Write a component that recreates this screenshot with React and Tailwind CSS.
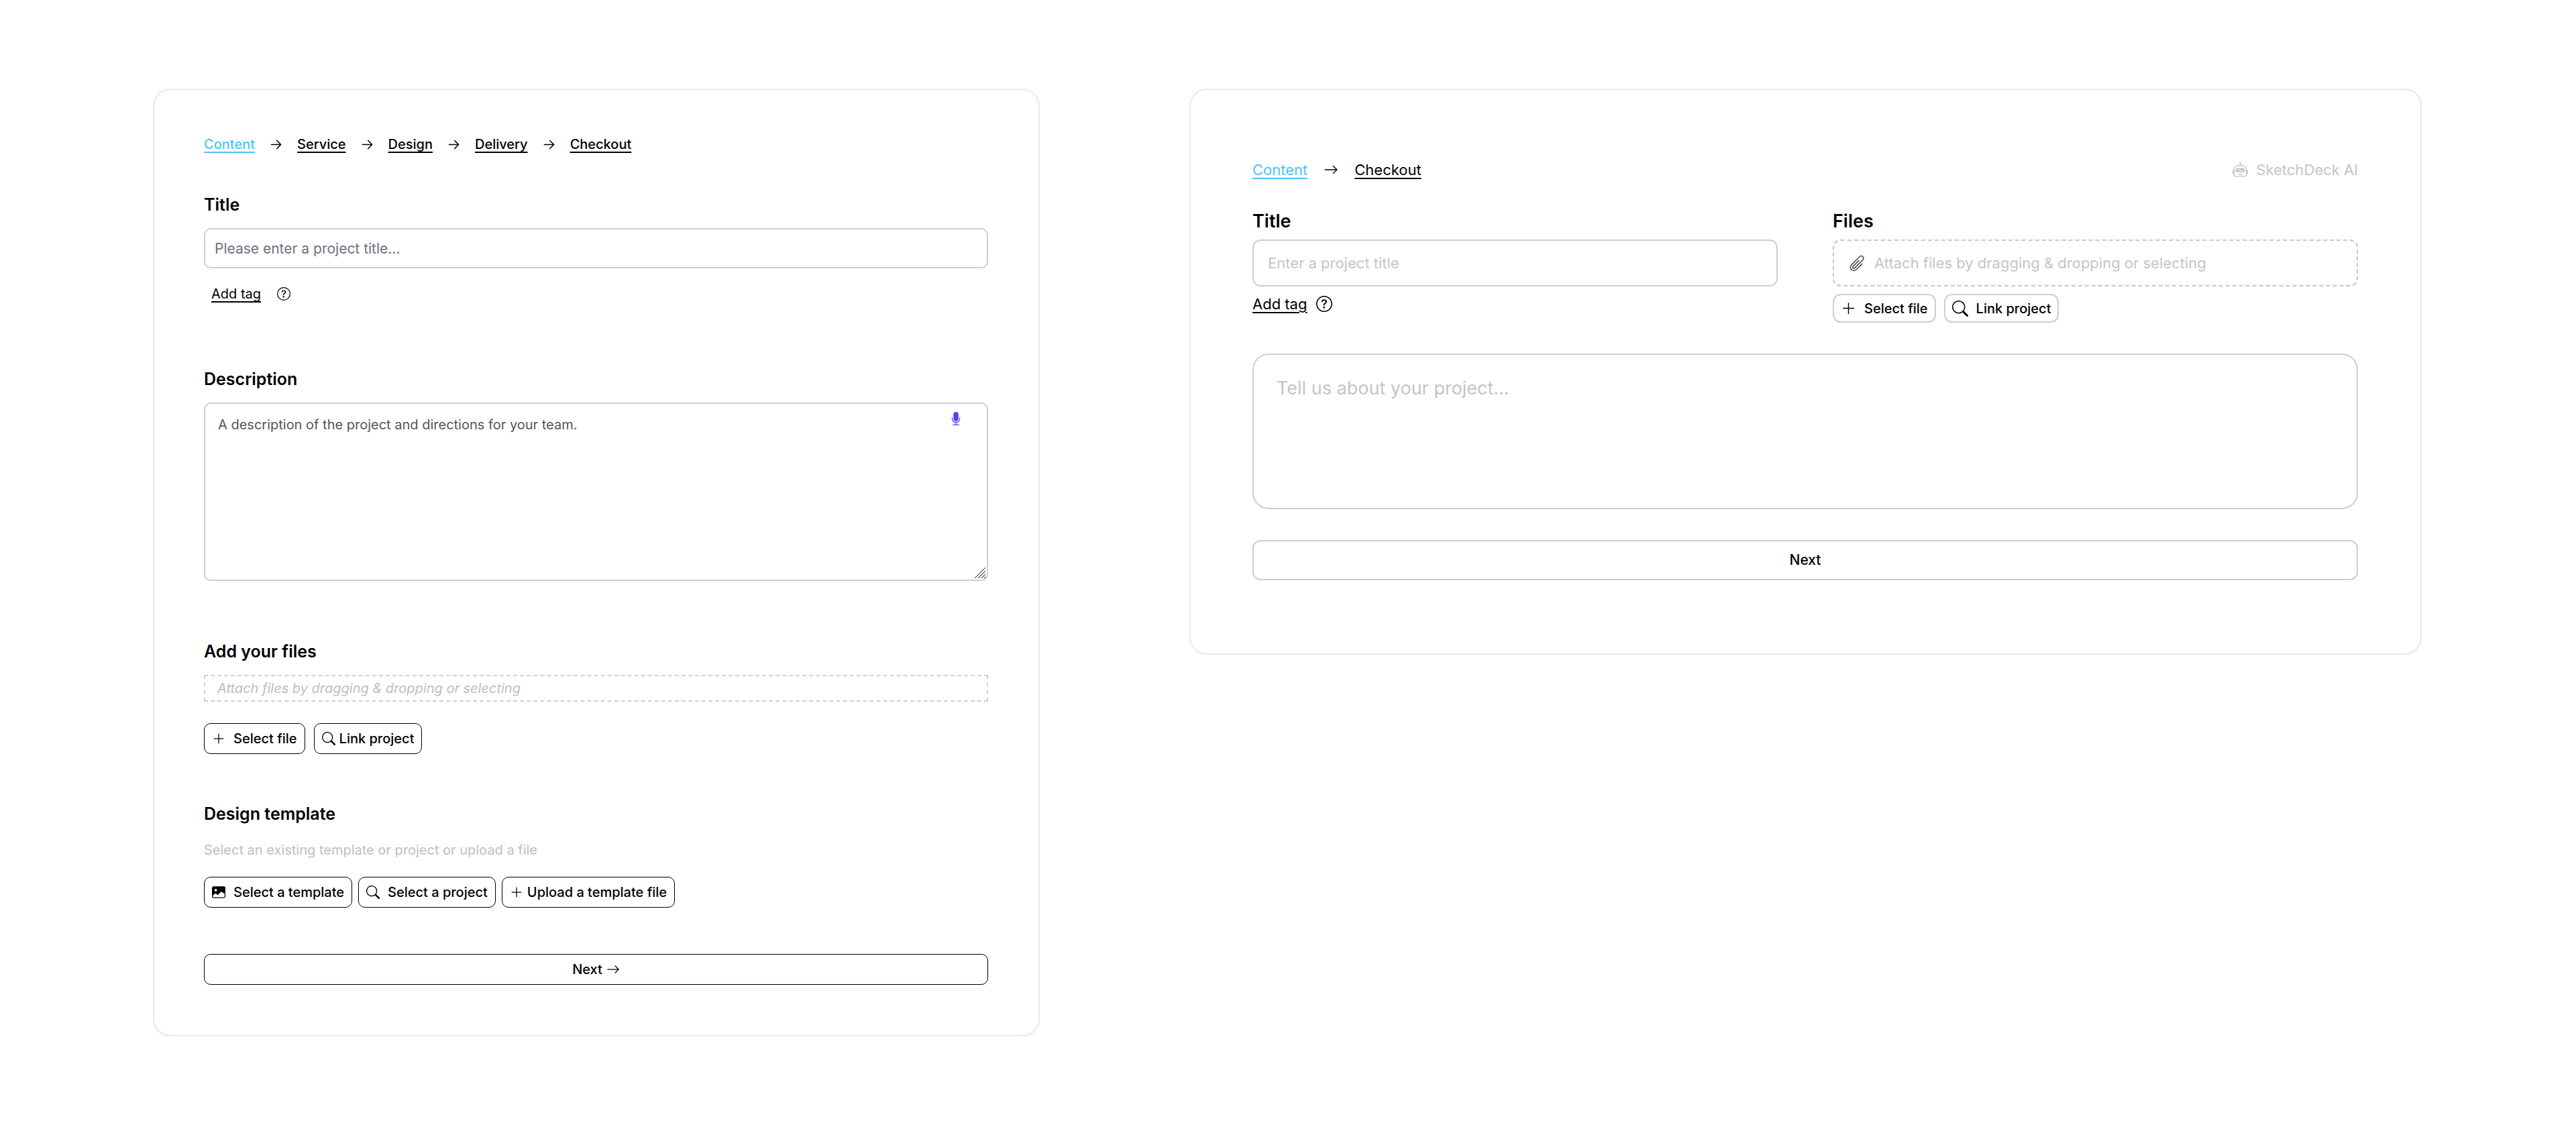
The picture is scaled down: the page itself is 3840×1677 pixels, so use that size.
import React, { useState } from 'react';
import {
  BsArrowRight,
  BsImageFill,
  BsMicFill,
  BsPlusLg,
  BsQuestionCircle,
  BsRobot,
  BsSearch
} from 'react-icons/bs';
import { HiOutlineArrowRight, HiOutlinePaperClip } from 'react-icons/hi2';

const STEPS = ['Content', 'Service', 'Design', 'Delivery', 'Checkout'];
const SHORT_STEPS = ['Content', 'Checkout'];

// --- Shared pieces ---
function Steps({ steps, current, className, arrow }) {
  return (
    <nav aria-label="Steps">
      <ol className={`flex items-center ${className}`}>
        {steps.map((step, i) => (
          <React.Fragment key={step}>
            {i > 0 && <li aria-hidden="true">{arrow}</li>}
            <li>
              <a
                href={`#${step.toLowerCase()}`}
                className={`block underline decoration-2 underline-offset-4 ${step === current ? 'text-[#4fc3f7]' : 'text-black'}`}
              >
                {step}
              </a>
            </li>
          </React.Fragment>
        ))}
      </ol>
    </nav>
  );
}

function OutlineButton({ icon, gap = 'gap-3', children }) {
  return (
    <button type="button" className={`flex h-[46px] items-center rounded-[10px] border border-black px-[11px] text-[20px] leading-6 font-medium ${gap}`}>
      {icon}
      {children}
    </button>
  );
}

function SoftButton({ icon, children }) {
  return (
    <button type="button" className="flex h-[43px] items-center gap-3 rounded-xl border-2 border-[#cdcdd4] px-[10px] text-[20px] leading-6 font-medium">
      {icon}
      {children}
    </button>
  );
}

function ResizeGrip() {
  return (
    <svg className="pointer-events-none absolute right-1 bottom-1 size-4" viewBox="0 0 16 16" fill="none" stroke="#555" strokeWidth="1.2" aria-hidden="true">
      <path d="M0 16L16 0M5 16L16 5M10 16L16 10M14 16L16 14" />
    </svg>
  );
}

// --- Full form ---
function FullForm() {
  const [title, setTitle] = useState('');
  const [description, setDescription] = useState('');

  return (
    <form className="rounded-[26px] border-2 border-[#e8e8eb] pt-[69px] pr-[75px] pb-[75px] pl-[74px]">
      <Steps
        steps={STEPS}
        current="Content"
        className="gap-[22px] text-[20px] leading-6 font-medium"
        arrow={<HiOutlineArrowRight size={19} strokeWidth={2} />}
      />

      <label htmlFor="full-title" className="mt-[62px] block text-[25px] leading-8 font-semibold">Title</label>
      <input
        id="full-title"
        type="text"
        value={title}
        onChange={(e) => setTitle(e.target.value)}
        placeholder="Please enter a project title..."
        className="mt-[19px] block h-[60px] w-full rounded-[10px] border-2 border-[#cdcdd4] px-[14px] text-[21px] placeholder:text-[#6b7280]"
      />
      <div className="mt-[26px] flex items-center gap-6 pl-[11px] text-[20px] leading-6">
        <button type="button" className="underline decoration-2 underline-offset-4">Add tag</button>
        <BsQuestionCircle size={20} />
      </div>

      <label htmlFor="full-description" className="mt-[99px] block text-[25px] leading-8 font-semibold">Description</label>
      <div className="relative mt-[19px]">
        <textarea
          id="full-description"
          value={description}
          onChange={(e) => setDescription(e.target.value)}
          placeholder="A description of the project and directions for your team."
          className="block h-[266px] w-full resize-none rounded-[10px] border-2 border-[#cdcdd4] px-[19px] pt-[19px] text-[20px] leading-6 placeholder:text-[#555]"
        />
        <button type="button" aria-label="Dictate" className="absolute top-[14px] right-[38px] text-[#5b3df5]">
          <BsMicFill size={20} />
        </button>
        <ResizeGrip />
      </div>

      <h2 className="mt-[89px] text-[25px] leading-8 font-semibold">Add your files</h2>
      <label className="mt-[19px] flex h-10 items-center border-2 border-dashed border-[#d0d0d6] px-[18px] text-[20px] leading-6 text-[#bdbdc5] italic">
        <input type="file" multiple className="sr-only" />
        Attach files by dragging &amp; dropping or selecting
      </label>
      <div className="mt-8 flex gap-[13px]">
        <OutlineButton icon={<BsPlusLg size={20} />}>Select file</OutlineButton>
        <OutlineButton icon={<BsSearch size={20} />} gap="gap-1.5">Link project</OutlineButton>
      </div>

      <h2 className="mt-[73px] text-[25px] leading-8 font-semibold">Design template</h2>
      <p className="mt-[26px] text-[20px] leading-6 text-[#bdbdc5]">Select an existing template or project or upload a file</p>
      <div className="mt-7 flex gap-[9px]">
        <OutlineButton icon={<BsImageFill size={20} />}>Select a template</OutlineButton>
        <OutlineButton icon={<BsSearch size={20} />}>Select a project</OutlineButton>
        <OutlineButton icon={<BsPlusLg size={20} />} gap="gap-1.5">Upload a template file</OutlineButton>
      </div>

      <button type="submit" className="mt-[69px] flex h-[46px] w-full items-center justify-center gap-1.5 rounded-[10px] border border-black text-[20px] leading-6 font-medium">
        Next
        <BsArrowRight size={20} />
      </button>
    </form>
  );
}

// --- Short form ---
function ShortForm() {
  const [title, setTitle] = useState('');
  const [brief, setBrief] = useState('');

  return (
    <form className="rounded-[26px] border-2 border-[#e8e8eb] pt-[105px] pr-[93px] pb-[109px] pl-[92px]">
      <div className="flex items-center justify-between text-[22px] leading-7">
        <Steps
          steps={SHORT_STEPS}
          current="Content"
          className="gap-6"
          arrow={<BsArrowRight size={22} />}
        />
        <div className="flex items-center gap-3 text-[#c4c4cc]">
          <BsRobot size={23} />
          SketchDeck AI
        </div>
      </div>

      <div className="mt-[46px] grid grid-cols-2 gap-[82px]">
        <div>
          <label htmlFor="short-title" className="block text-[27px] leading-[34px] font-semibold">Title</label>
          <input
            id="short-title"
            type="text"
            value={title}
            onChange={(e) => setTitle(e.target.value)}
            placeholder="Enter a project title"
            className="mt-[10px] block h-[70px] w-full rounded-xl border-2 border-[#cdcdd4] px-[21px] text-[22px] placeholder:text-[#c4c4cc]"
          />
          <div className="mt-3 flex items-center gap-[14px] text-[22px] leading-7">
            <button type="button" className="underline decoration-2 underline-offset-4">Add tag</button>
            <BsQuestionCircle size={24} />
          </div>
        </div>

        <div>
          <h2 className="text-[27px] leading-[34px] font-semibold">Files</h2>
          <label className="mt-[10px] flex h-[70px] items-center gap-3 rounded-xl border-2 border-dashed border-[#c6c6ce] px-[21px] text-[22px] leading-7 text-[#c4c4cc]">
            <input type="file" multiple className="sr-only" />
            <HiOutlinePaperClip size={27} className="text-[#52525b]" />
            Attach files by dragging &amp; dropping or selecting
          </label>
          <div className="mt-[11px] flex gap-3">
            <SoftButton icon={<BsPlusLg size={23} />}>Select file</SoftButton>
            <SoftButton icon={<BsSearch size={24} />}>Link project</SoftButton>
          </div>
        </div>
      </div>

      <textarea
        aria-label="Project brief"
        value={brief}
        onChange={(e) => setBrief(e.target.value)}
        placeholder="Tell us about your project..."
        className="mt-[46px] block h-[232px] w-full resize-none rounded-3xl border-2 border-[#cdcdd4] px-[34px] pt-[33px] text-[27px] leading-[34px] placeholder:text-[#c4c4cc]"
      />

      <button type="submit" className="mt-[46px] h-[60px] w-full rounded-xl border-2 border-[#cdcdd4] text-[21px] leading-7 font-medium">
        Next
      </button>
    </form>
  );
}

export default function App() {
  return (
    <main className="grid min-h-screen grid-cols-[1322fr_1837fr] items-start gap-[223px] bg-white py-[132px] pr-[230px] pl-[228px] font-['Inter',sans-serif] text-black">
      <FullForm />
      <ShortForm />
    </main>
  );
}
